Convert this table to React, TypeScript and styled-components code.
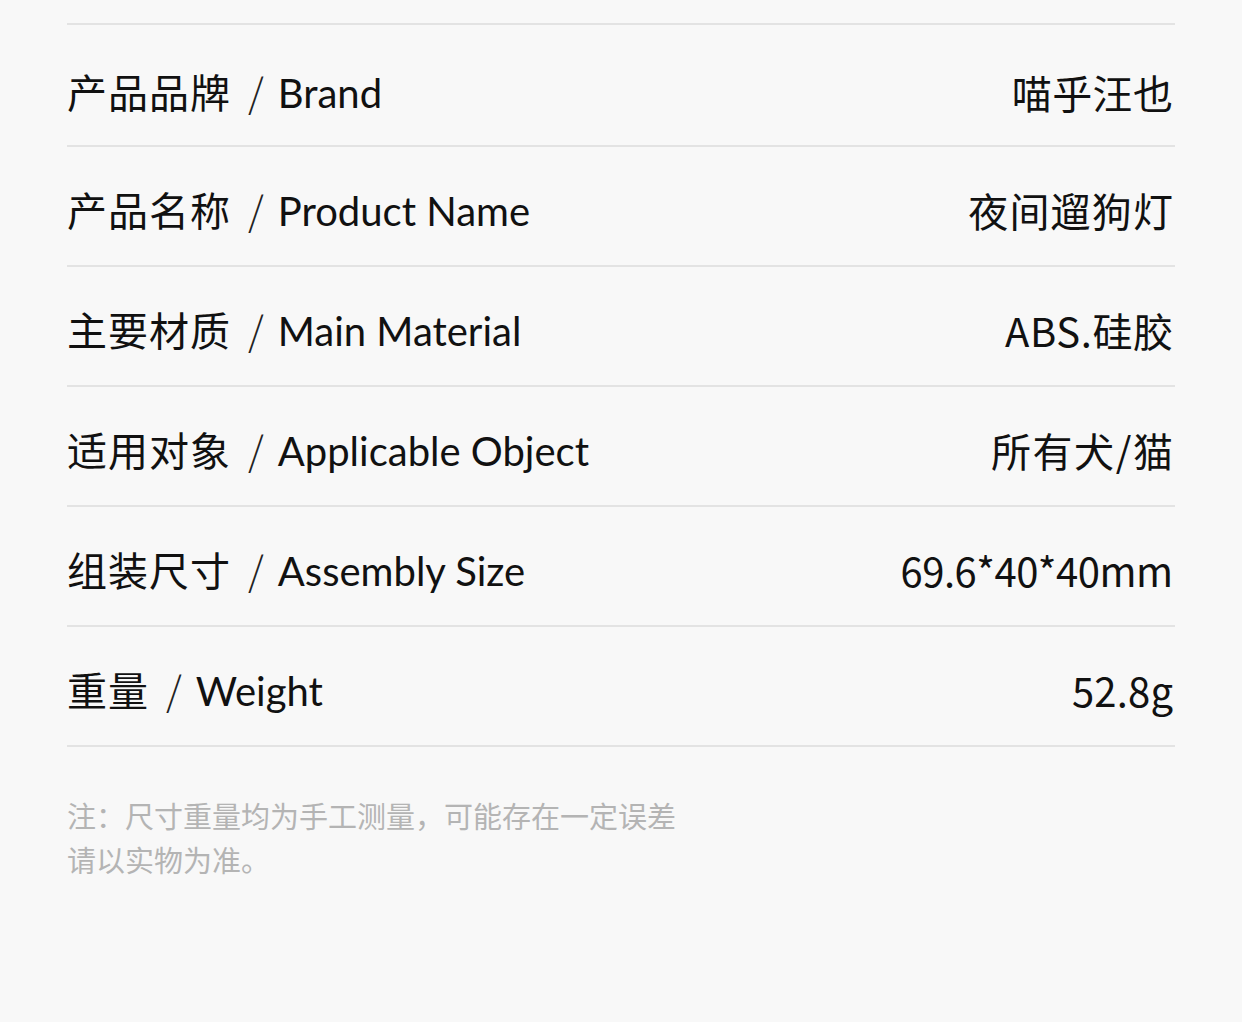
import React from "react";
import styled, { createGlobalStyle } from "styled-components";

const Global = createGlobalStyle`
  html, body { margin: 0; padding: 0; background: #f8f8f8; }
  body { font-family: "Noto Sans CJK SC", "Noto Sans", sans-serif; color: #111; }
`;

const Page = styled.div`
  width: 1242px;
  min-height: 1022px;
  box-sizing: border-box;
  padding: 23px 67px 0 67px;
  background: #f8f8f8;
`;

const Table = styled.div`
  display: flex;
  flex-direction: column;
  border-bottom: 2px solid #e3e3e3;
  width: 1108px;
`;

const Row = styled.div`
  display: flex;
  align-items: center;
  justify-content: space-between;
  border-top: 2px solid #e3e3e3;
  padding-top: 8px;
  box-sizing: border-box;
  height: 120px;
  font-size: 40px;
  line-height: 1;

  &:first-child {
    height: 122px;
    padding-top: 14px;
  }
`;

const Label = styled.div`
  display: flex;
  align-items: baseline;
  white-space: nowrap;
  color: #111;
`;

const Zh = styled.span`
  letter-spacing: 1px;
`;

const Slash = styled.span`
  margin: 0 14px 0 17px;
  font-weight: 300;
  color: #222;
`;

const En = styled.span`
  font-family: Lato, "Noto Sans", sans-serif;
  letter-spacing: 0px;
`;

const Value = styled.div<{ $spacing: number }>`
  white-space: nowrap;
  color: #111;
  letter-spacing: ${(p) => p.$spacing}px;
  margin-right: ${(p) => 2 - p.$spacing}px;
`;

const Note = styled.div`
  margin-top: 46px;
  font-size: 29px;
  line-height: 44px;
  color: #b4b4b4;
`;

const rows = [
  { zh: "产品品牌", en: "Brand", v: "喵乎汪也", s: 0.4 },
  { zh: "产品名称", en: "Product Name", v: "夜间遛狗灯", s: 1.2 },
  { zh: "主要材质", en: "Main Material", v: "ABS.硅胶", s: 0.6 },
  { zh: "适用对象", en: "Applicable Object", v: "所有犬/猫", s: 1.6 },
  { zh: "组装尺寸", en: "Assembly Size", v: "69.6*40*40mm", s: -0.5 },
  { zh: "重量", en: "Weight", v: "52.8g", s: 0.2 },
];

export default function App() {
  return (
    <Page>
      <Global />
      <Table>
        {rows.map((r) => (
          <Row key={r.zh}>
            <Label>
              <Zh>{r.zh}</Zh>
              <Slash>/</Slash>
              <En>{r.en}</En>
            </Label>
            <Value $spacing={r.s}>{r.v}</Value>
          </Row>
        ))}
      </Table>
      <Note>
        注：尺寸重量均为手工测量，可能存在一定误差
        <br />
        请以实物为准。
      </Note>
    </Page>
  );
}
